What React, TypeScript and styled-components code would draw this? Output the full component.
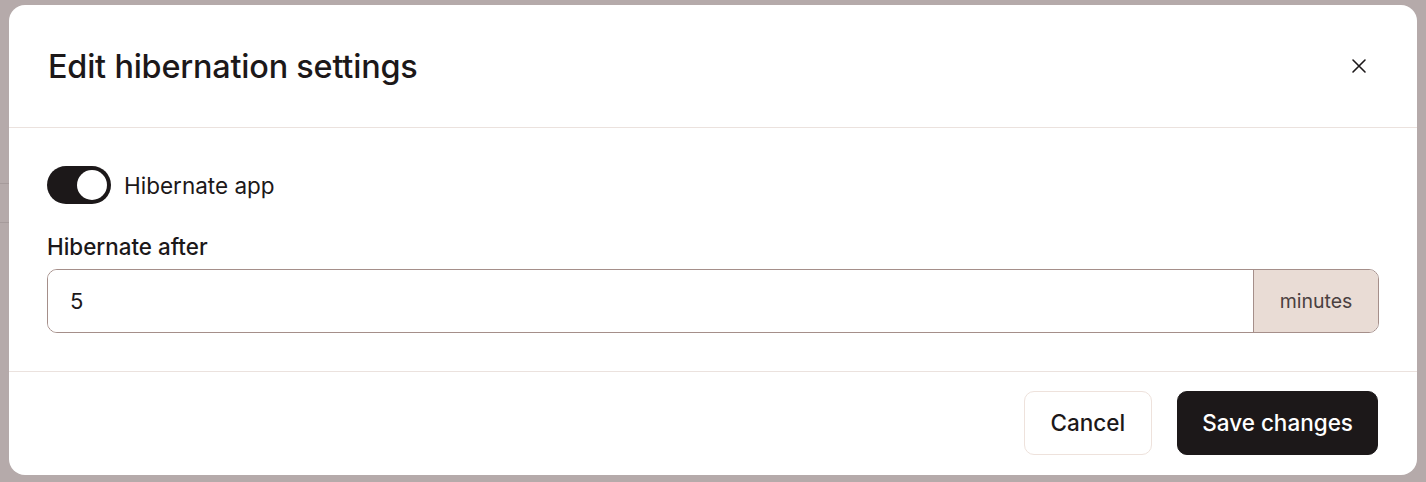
import React, { useState } from "react";
import styled, { createGlobalStyle } from "styled-components";

const Global = createGlobalStyle`
  html, body { margin: 0; padding: 0; }
  body {
    background: #b5aaaa;
    font-family: Inter, "Noto Sans", sans-serif;
    color: #1c1819;
    width: 1426px;
    height: 482px;
    overflow: hidden;
  }
`;

const Backdrop = styled.div`
  position: relative;
  width: 1426px;
  height: 482px;
  padding: 5px 9px 0 9px;
  box-sizing: border-box;
`;

const BgLine = styled.div<{ $top: number }>`
  position: absolute;
  left: 0;
  width: 9px;
  top: ${(p) => p.$top}px;
  height: 1px;
  background: #a69b9b;
`;

const Dialog = styled.div`
  position: relative;
  width: 1408px;
  height: 470px;
  background: #ffffff;
  border-radius: 16px;
  display: flex;
  flex-direction: column;
  overflow: hidden;
`;

const Header = styled.div`
  height: 123px;
  box-sizing: border-box;
  padding: 0 46px 0 39px;
  display: flex;
  align-items: center;
  justify-content: space-between;
  border-bottom: 1px solid #ebe2de;
`;

const Title = styled.h2`
  margin: 0;
  font-size: 32.4px;
  font-weight: 500;
  letter-spacing: -0.2px;
  color: #1c1819;
`;

const CloseButton = styled.button`
  border: none;
  background: transparent;
  padding: 0;
  width: 24px;
  height: 24px;
  display: flex;
  align-items: center;
  justify-content: center;
  cursor: pointer;
  color: #1c1819;
`;

const Body = styled.div`
  padding: 38px 38px 38px 38px;
  display: flex;
  flex-direction: column;
  border-bottom: 1px solid #ebe2de;
`;

const ToggleRow = styled.label`
  display: flex;
  align-items: center;
  gap: 13px;
  font-size: 22.5px;
  color: #1c1819;
  cursor: pointer;
`;

const Track = styled.span<{ $on: boolean }>`
  position: relative;
  width: 64px;
  height: 38px;
  border-radius: 19px;
  background: ${(p) => (p.$on ? "#1c1819" : "#d8ccc7")};
  flex-shrink: 0;
`;

const Knob = styled.span<{ $on: boolean }>`
  position: absolute;
  top: 4px;
  left: ${(p) => (p.$on ? "30px" : "4px")};
  width: 30px;
  height: 30px;
  border-radius: 50%;
  background: #ffffff;
`;

const FieldLabel = styled.div`
  margin-top: 30px;
  font-size: 22.4px;
  font-weight: 500;
  color: #1c1819;
  line-height: 26px;
`;

const InputGroup = styled.div`
  margin-top: 9px;
  display: flex;
  height: 64px;
  border: 1px solid #a58f8a;
  border-radius: 10px;
  overflow: hidden;
  box-sizing: border-box;
`;

const TextInput = styled.input`
  flex: 1;
  border: none;
  outline: none;
  padding: 0 22px;
  font-family: Inter, "Noto Sans", sans-serif;
  font-size: 22px;
  color: #1c1819;
  background: #fff;
`;

const Addon = styled.span`
  width: 124px;
  display: flex;
  align-items: center;
  justify-content: center;
  background: #e9dcd5;
  border-left: 1px solid #a58f8a;
  font-size: 19.5px;
  color: #4a4040;
`;

const Footer = styled.div`
  flex: 1;
  display: flex;
  align-items: center;
  justify-content: flex-end;
  gap: 25px;
  padding: 0 39px 2px 39px;
`;

const Button = styled.button<{ $primary?: boolean }>`
  height: 64px;
  padding: 0 ${(p) => (p.$primary ? "24px" : "26px")};
  border-radius: 10px;
  font-family: Inter, "Noto Sans", sans-serif;
  font-size: 22.5px;
  font-weight: 500;
  cursor: pointer;
  border: 1px solid ${(p) => (p.$primary ? "#1c1819" : "#eee2dc")};
  background: ${(p) => (p.$primary ? "#1c1819" : "#ffffff")};
  color: ${(p) => (p.$primary ? "#ffffff" : "#1c1819")};
`;

export default function App() {
  const [on, setOn] = useState(true);
  const [val, setVal] = useState("5");
  return (
    <>
      <Global />
      <Backdrop>
        <BgLine $top={183} />
        <BgLine $top={222} />
        <Dialog>
          <Header>
            <Title>Edit hibernation settings</Title>
            <CloseButton aria-label="Close">
              <svg width="16" height="16" viewBox="0 0 16 16" fill="none">
                <path d="M2 2L14 14M14 2L2 14" stroke="#1c1819" strokeWidth="1.6" strokeLinecap="round" />
              </svg>
            </CloseButton>
          </Header>
          <Body>
            <ToggleRow onClick={() => setOn(!on)}>
              <Track $on={on}>
                <Knob $on={on} />
              </Track>
              Hibernate app
            </ToggleRow>
            <FieldLabel>Hibernate after</FieldLabel>
            <InputGroup>
              <TextInput value={val} onChange={(e) => setVal(e.target.value)} />
              <Addon>minutes</Addon>
            </InputGroup>
          </Body>
          <Footer>
            <Button>Cancel</Button>
            <Button $primary>Save changes</Button>
          </Footer>
        </Dialog>
      </Backdrop>
    </>
  );
}
